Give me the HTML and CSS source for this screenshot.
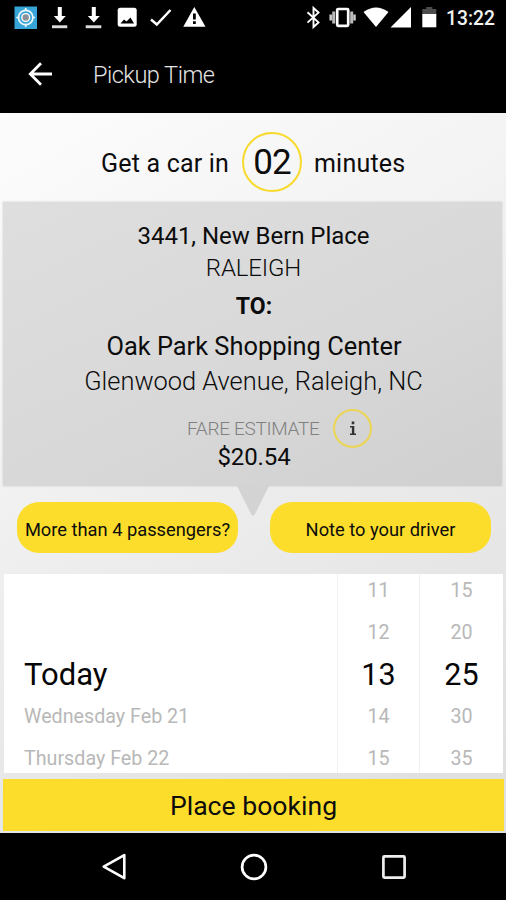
FILE: index.html
```
<!DOCTYPE html>
<html lang="en">
<head>
<meta charset="utf-8">
<title>Pickup Time</title>
<link rel="stylesheet" href="styles.css">
</head>
<body>
<div class="screen">
  <div class="status">
    <svg class="status-icons" width="506" height="37" viewBox="0 0 506 37">
      <rect x="14.500" y="6.500" width="22.500" height="22.500" fill="#38a5d8"/>
      <g fill="none" stroke="#eef8fc" stroke-width="1.700"><circle cx="25.700" cy="17.500" r="7.200"/><path d="M25.700 8v3M25.700 24v3M16.300 17.500h3M32 17.500h3"/></g>
      <circle cx="25.700" cy="17.500" r="4.600" fill="#fff"/><circle cx="25.700" cy="17.500" r="3.200" fill="#8a9298"/>
      <g fill="#fff"><path d="M57.800 7h4v9h4l-6 6.500-6-6.500h4z"/><rect x="52" y="25.300" width="15.300" height="2.900" fill="#ddd"/></g>
      <g fill="#fff"><path d="M91.800 7h4v9h4l-6 6.500-6-6.500h4z"/><rect x="85.700" y="25.300" width="15.600" height="2.900" fill="#ddd"/></g>
      <rect x="117.700" y="7.800" width="19" height="19" rx="2.500" fill="#fff"/><path d="M120.500 23.500l3.500-4 2.500 2 4-4 3.500 6z" fill="#000"/>
      <path d="M151 19.500l5.800 5L170.500 10" fill="none" stroke="#fff" stroke-width="2.500"/>
      <path d="M194.300 7l11.200 19.700h-22.200z" fill="#fff"/><path d="M193 13.500h2.800v6H193zM193 21.300h2.800v2.700H193z" fill="#000"/>
      <path d="M307.500 12.200l11 10.200-5 4.600V8l5 4.600-11 10" fill="none" stroke="#fff" stroke-width="1.900"/>
      <rect x="337.200" y="9" width="11" height="16.800" rx="1" fill="none" stroke="#fff" stroke-width="2.700"/>
      <path d="M330.700 14.500v6M354.500 14.500v6" stroke="#ccc" stroke-width="2.500"/><path d="M333.700 11.500v12M351.700 11.500v12" stroke="#bbb" stroke-width="3"/>
      <path d="M363.500 12Q376 3 388.500 12L376 27z" fill="#fff"/>
      <path d="M411 7v20.500h-20.500z" fill="#fff"/>
      <path d="M422.300 9h4V7h6v2h4v6h-14z" fill="#4c4c4c"/><path d="M422.300 14h14v13.300h-14z" fill="#fff"/>
    </svg>
    <span class="clock">13:22</span>
  </div>
  <header class="appbar">
    <svg width="24" height="24" viewBox="0 0 24 24"><path d="M24 12H2.500M13 1.300L2.300 12 13 22.700" fill="none" stroke="#fff" stroke-width="2.800"/></svg>
    <h1 class="title">Pickup Time</h1>
  </header>
  <main class="content">
    <div class="eta"><span class="eta-a">Get a car in</span><span class="ring">02</span><span class="eta-b">minutes</span></div>
    <section class="trip">
      <div class="from">3441, New Bern Place</div>
      <div class="city">RALEIGH</div>
      <div class="to">TO:</div>
      <div class="dest">Oak Park Shopping Center</div>
      <div class="addr">Glenwood Avenue, Raleigh, NC</div>
      <div class="fare"><span class="fare-label">FARE ESTIMATE</span><span class="info"><svg width="8" height="15" viewBox="0 0 8 15"><path d="M2.700.5h2.600v2.700H2.700zM1 5h4.300v7.500H7V14H1v-1.500h1.900v-6H1z" fill="#333"/></svg></span></div>
      <div class="price">$20.54</div>
    </section>
    <div class="actions">
      <svg class="pointer" width="32" height="31" viewBox="0 0 32 31"><path d="M0 0h32L18 28q-2 3-4 0z" fill="#d3d3d3"/></svg>
      <button class="pill"><span class="pill-a">More than 4 passengers?</span></button>
      <button class="pill"><span class="pill-b">Note to your driver</span></button>
    </div>
    <div class="picker">
      <div class="col day"><span></span><span></span><b>Today</b><span>Wednesday Feb 21</span><span>Thursday Feb 22</span></div>
      <div class="col"><span>11</span><span>12</span><b>13</b><span>14</span><span>15</span></div>
      <div class="col"><span>15</span><span>20</span><b>25</b><span>30</span><span>35</span></div>
    </div>
    <button class="book"><span>Place booking</span></button>
  </main>
  <nav class="nav">
    <svg width="26" height="28" viewBox="0 0 26 28"><path d="M23.300 2.200v23L2.700 13.700z" fill="none" stroke="#fff" stroke-width="2.600" stroke-linejoin="round"/></svg>
    <svg width="28" height="28" viewBox="0 0 28 28"><circle cx="14" cy="14" r="11.900" fill="none" stroke="#fff" stroke-width="2.700"/></svg>
    <svg width="26" height="28" viewBox="0 0 26 28"><rect x="2.400" y="3.400" width="21.200" height="21.200" rx="1" fill="none" stroke="#eee" stroke-width="2.700"/></svg>
  </nav>
</div>
</body>
</html>
```
FILE: styles.css
```
* { box-sizing: border-box; }
body { margin: 0; background: #000; font-family: Roboto, sans-serif; color: #0c0c0c; }
span, h1, b, .trip div { white-space: nowrap; }
button { border: 0; padding: 0; font: inherit; color: inherit; }
.screen { width: 506px; height: 900px; display: flex; flex-direction: column; background: #000; overflow: hidden; }
.status { height: 37px; display: grid; color: #f2f2f2; }
.status-icons, .clock { grid-area: 1 / 1; }
.clock { justify-self: end; align-self: center; padding-right: 11px; font-size: 19.300px; font-weight: 500; }
.appbar { height: 76px; display: flex; align-items: center; padding: 0 0 2px 28px; color: #e4e4e4; }
.title { margin: 2px 0 0 41px; font-size: 23.500px; letter-spacing: -0.500px; font-weight: 300; }
.content { height: 720px; background: linear-gradient(150deg, #fcfcfc, #f4f4f4 30%, #e8e8e8 65%, #dedede); }
.eta { height: 89px; display: flex; align-items: center; padding: 9px 0 0 101px; font-size: 25px; }
.eta-a { width: 141px; padding-top: 2px; letter-spacing: 0.200px; }
.eta-b { padding-top: 2px; letter-spacing: 0.200px; }
.ring { width: 60px; height: 60px; margin-right: 12px; border: 2.500px solid #f8da2c; border-radius: 50%; display: flex; align-items: center; justify-content: center; font-size: 35px; letter-spacing: -0.800px; }
.trip { height: 284px; margin: 0 4px 0 3px; padding-top: 18px; text-align: center; font-size: 24px; background: linear-gradient(155deg, #dedede, #d9d9d9 50%, #d0d0d0); box-shadow: 0 0 2px #ccc; }
.from { line-height: 32px; padding-left: 2px; letter-spacing: -0.050px; }
.city { line-height: 32px; font-weight: 300; padding-left: 2px; letter-spacing: -0.150px; }
.to { line-height: 45px; font-weight: 700; font-size: 23px; padding-left: 3px; }
.dest { line-height: 35px; font-size: 25.400px; padding-left: 3px; }
.addr { line-height: 35px; font-weight: 300; font-size: 25.400px; padding-left: 2px; }
.fare { height: 40px; margin-top: 9px; display: flex; align-items: center; padding-left: 184px; font-size: 19px; letter-spacing: -0.300px; font-weight: 300; color: #808080; }
.fare-label { width: 146px; text-align: left; }
.info { width: 39px; height: 39px; border: 2px solid #ecd552; border-radius: 50%; display: flex; align-items: center; justify-content: center; }
.price { line-height: 18px; padding-left: 3px; letter-spacing: -0.100px; }
.actions { position: relative; height: 88px; padding: 16px 15px 0 17px; display: flex; gap: 32px; }
.pointer { position: absolute; left: 237px; top: 0; }
.pill { width: 221px; height: 51px; border-radius: 22px; background: #fcdd2b; font-size: 18.300px; display: flex; align-items: center; justify-content: center; padding-top: 3px; }
.picker { height: 199px; margin: 0 3px 0 4px; display: grid; grid-template-columns: 333px 82px 84px; background: #fff; overflow: hidden; }
.col { display: grid; grid-template-rows: repeat(5, 42px); align-items: center; justify-items: center; margin-top: -5px; color: #b8b8b8; font-size: 19.700px; border-left: 1px solid #f1f1f1; }
.col b { color: #050505; font-weight: 400; font-size: 30.500px; }
.day { justify-items: start; padding-left: 20px; border: 0; }
.day b { font-size: 31px; }
.book { display: block; width: 501px; height: 52px; margin: 6px 0 0 3px; background: #fddd2c; font-size: 26.600px; }
.nav { height: 67px; display: flex; justify-content: space-between; align-items: center; padding: 0 99px 0 101px; }
```
